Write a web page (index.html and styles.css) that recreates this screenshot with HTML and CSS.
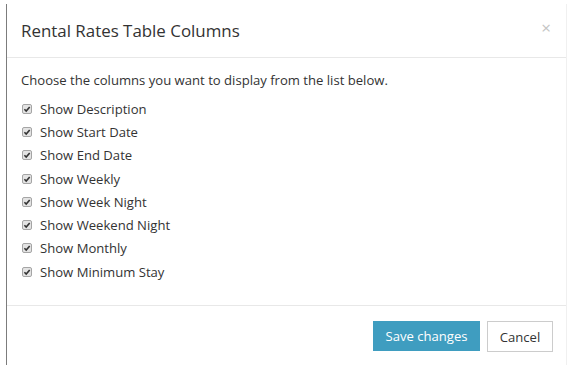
FILE: index.html
```html
<!DOCTYPE html>
<html>
<head>
<meta charset="utf-8">
<link rel="stylesheet" href="styles.css">
</head>
<body>
<div class="modal">
  <div class="modal-header">
    <h4 class="modal-title">Rental Rates Table Columns</h4>
    <span class="close">×</span>
  </div>
  <div class="modal-body">
    <p class="intro">Choose the columns you want to display from the list below.</p>
    <ul class="options">
      <li class="option"><svg class="cb" viewBox="0 0 10 10"><rect x="0.5" y="0.5" width="9" height="9" rx="1.5" fill="#e3e3e3" stroke="#a5a5a5"/><path d="M2.4 5.2 L4.2 7 L7.7 2.9" fill="none" stroke="#333" stroke-width="1.6"/></svg><span>Show Description</span></li>
      <li class="option"><svg class="cb" viewBox="0 0 10 10"><rect x="0.5" y="0.5" width="9" height="9" rx="1.5" fill="#e3e3e3" stroke="#a5a5a5"/><path d="M2.4 5.2 L4.2 7 L7.7 2.9" fill="none" stroke="#333" stroke-width="1.6"/></svg><span>Show Start Date</span></li>
      <li class="option"><svg class="cb" viewBox="0 0 10 10"><rect x="0.5" y="0.5" width="9" height="9" rx="1.5" fill="#e3e3e3" stroke="#a5a5a5"/><path d="M2.4 5.2 L4.2 7 L7.7 2.9" fill="none" stroke="#333" stroke-width="1.6"/></svg><span>Show End Date</span></li>
      <li class="option"><svg class="cb" viewBox="0 0 10 10"><rect x="0.5" y="0.5" width="9" height="9" rx="1.5" fill="#e3e3e3" stroke="#a5a5a5"/><path d="M2.4 5.2 L4.2 7 L7.7 2.9" fill="none" stroke="#333" stroke-width="1.6"/></svg><span>Show Weekly</span></li>
      <li class="option"><svg class="cb" viewBox="0 0 10 10"><rect x="0.5" y="0.5" width="9" height="9" rx="1.5" fill="#e3e3e3" stroke="#a5a5a5"/><path d="M2.4 5.2 L4.2 7 L7.7 2.9" fill="none" stroke="#333" stroke-width="1.6"/></svg><span>Show Week Night</span></li>
      <li class="option"><svg class="cb" viewBox="0 0 10 10"><rect x="0.5" y="0.5" width="9" height="9" rx="1.5" fill="#e3e3e3" stroke="#a5a5a5"/><path d="M2.4 5.2 L4.2 7 L7.7 2.9" fill="none" stroke="#333" stroke-width="1.6"/></svg><span>Show Weekend Night</span></li>
      <li class="option"><svg class="cb" viewBox="0 0 10 10"><rect x="0.5" y="0.5" width="9" height="9" rx="1.5" fill="#e3e3e3" stroke="#a5a5a5"/><path d="M2.4 5.2 L4.2 7 L7.7 2.9" fill="none" stroke="#333" stroke-width="1.6"/></svg><span>Show Monthly</span></li>
      <li class="option"><svg class="cb" viewBox="0 0 10 10"><rect x="0.5" y="0.5" width="9" height="9" rx="1.5" fill="#e3e3e3" stroke="#a5a5a5"/><path d="M2.4 5.2 L4.2 7 L7.7 2.9" fill="none" stroke="#333" stroke-width="1.6"/></svg><span>Show Minimum Stay</span></li>
    </ul>
  </div>
  <div class="modal-footer">
    <button class="btn btn-primary">Save changes</button>
    <button class="btn btn-default">Cancel</button>
  </div>
</div>
</body>
</html>
```
FILE: styles.css
```css
html, body {
  margin: 0;
  padding: 0;
  background: #fff;
}
body {
  font-family: "Open Sans", "Liberation Sans", sans-serif;
  color: #333;
  font-size: 13.1px;
}
.modal {
  margin: 4px 0 0 6px;
  width: 561px;
  height: 361px;
  box-sizing: border-box;
  border-left: 1px solid #7c7c7c;
  border-right: 1px solid #f0f0f0;
  display: flex;
  flex-direction: column;
}
.modal-header {
  height: 54px;
  box-sizing: border-box;
  padding: 0 15px 0 14px;
  border-bottom: 1px solid #e8e8e8;
  display: flex;
  align-items: center;
  justify-content: space-between;
}
.modal-title {
  margin: 0;
  font-size: 16.9px;
  font-weight: 400;
  line-height: 25px;
  color: #333;
}
.close {
  font-size: 17px;
  line-height: 20px;
  color: #c4c4c4;
  margin-top: -6px;
}
.modal-body {
  padding: 12px 14px 22px 14px;
  border-bottom: 1px solid #e8e8e8;
}
.intro {
  margin: 0 0 7px 0;
  line-height: 20px;
}
.options {
  list-style: none;
  margin: 0;
  padding: 0;
}
.option {
  height: 23.3px;
  display: flex;
  align-items: center;
}
.cb {
  width: 10px;
  height: 10px;
  margin: 0 8px 0 1px;
  flex: none;
}
.modal-footer {
  display: flex;
  justify-content: flex-end;
  gap: 7px;
  padding: 15px 13px 0 0;
}
.btn {
  font-family: "Open Sans", "Liberation Sans", sans-serif;
  font-size: 13.1px;
  line-height: 20px;
  height: 31px;
  box-sizing: border-box;
  border-radius: 0;
  padding: 0;
  white-space: nowrap;
  cursor: pointer;
}
.btn-primary {
  background: #3f9dc0;
  border: 1px solid #3f9dc0;
  color: #fff;
  width: 107px;
  height: 30px;
}
.btn-default {
  background: #fff;
  border: 1px solid #ccc;
  color: #333;
  width: 66px;
}
```
